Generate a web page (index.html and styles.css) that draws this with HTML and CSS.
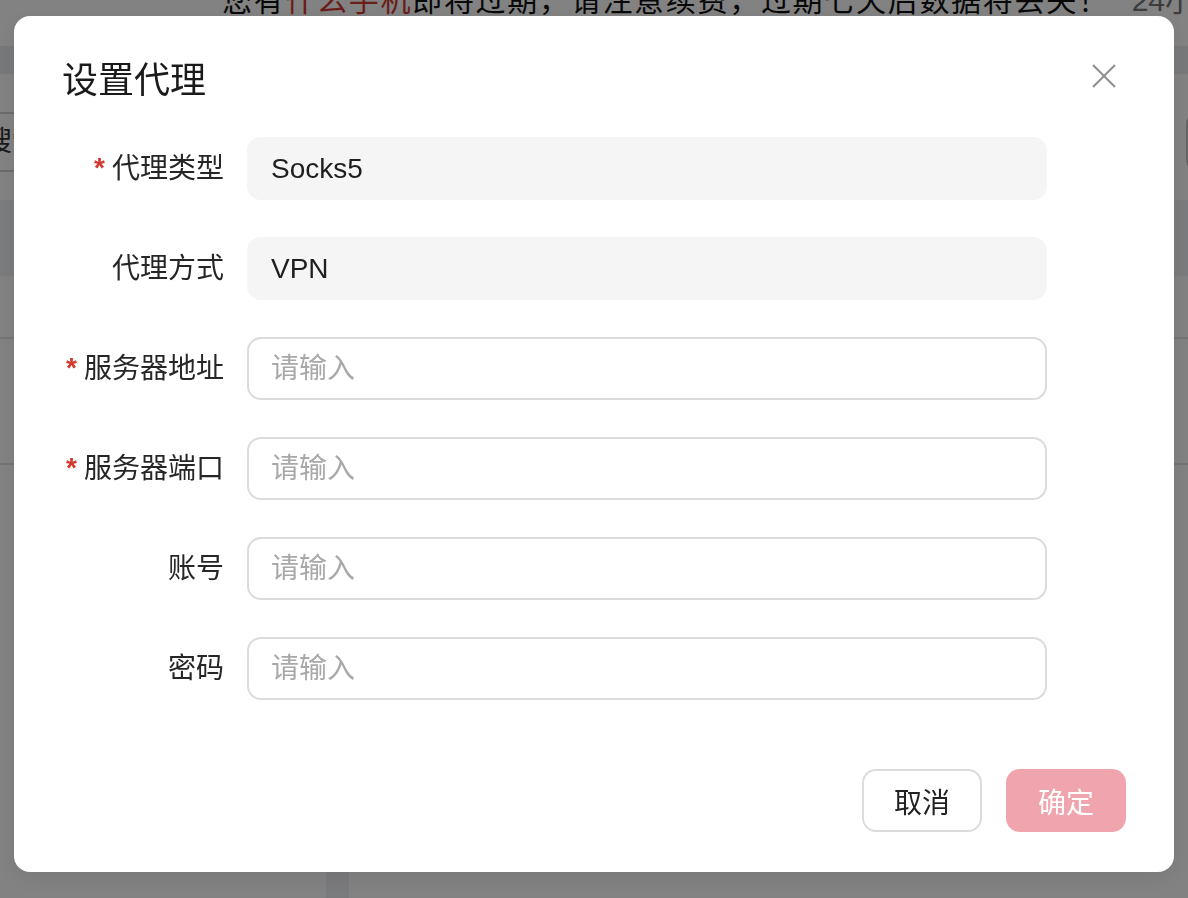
FILE: index.html
```html
<!DOCTYPE html>
<html lang="zh-CN">
<head>
<meta charset="utf-8">
<title>设置代理</title>
<link rel="stylesheet" href="styles.css">
</head>
<body>
<div class="page">
  <div class="notice">
    <span class="notice-text">您有<em class="notice-red">什么手机</em>即将过期，请注意续费，过期七天后数据将丢失！</span>
    <span class="notice-count">24小时</span>
  </div>
  <div class="band"></div>
  <div class="search-row">
    <div class="search-btn">搜索</div>
    <div class="search-right"></div>
  </div>
  <div class="table-head"></div>
  <div class="table-row table-row-short"></div>
  <div class="table-row"></div>
  <div class="page-bottom"><div class="page-tab"></div></div>
</div>

<div class="overlay">
  <div class="modal">
    <div class="modal-header">
      <h2 class="modal-title">设置代理</h2>
      <svg class="close" viewBox="0 0 24 24" width="24" height="24" aria-label="关闭">
        <path d="M1 1 L23 23 M23 1 L1 23" stroke="#8e8e8e" stroke-width="2" fill="none" stroke-linecap="butt"/>
      </svg>
    </div>
    <form class="form">
      <div class="row">
        <label class="label"><span class="star">*</span>代理类型</label>
        <input class="field field-readonly" value="Socks5" readonly>
      </div>
      <div class="row">
        <label class="label">代理方式</label>
        <input class="field field-readonly" value="VPN" readonly>
      </div>
      <div class="row">
        <label class="label"><span class="star">*</span>服务器地址</label>
        <input class="field" placeholder="请输入">
      </div>
      <div class="row">
        <label class="label"><span class="star">*</span>服务器端口</label>
        <input class="field" placeholder="请输入">
      </div>
      <div class="row">
        <label class="label">账号</label>
        <input class="field" placeholder="请输入">
      </div>
      <div class="row">
        <label class="label">密码</label>
        <input class="field" placeholder="请输入">
      </div>
    </form>
    <div class="footer">
      <button class="btn btn-cancel" type="button">取消</button>
      <button class="btn btn-ok" type="button">确定</button>
    </div>
  </div>
</div>
</body>
</html>
```

FILE: styles.css
```css
html, body {
  margin: 0;
  padding: 0;
  width: 1188px;
  height: 898px;
  overflow: hidden;
  background: #ffffff;
  font-family: "Liberation Sans", "Noto Sans CJK SC", sans-serif;
}

.page {
  width: 1188px;
  height: 898px;
  display: flex;
  flex-direction: column;
  overflow: hidden;
}

.notice {
  height: 46px;
  display: flex;
  align-items: flex-start;
  padding-left: 222px;
  flex-shrink: 0;
}

.notice-text {
  margin-top: -15px;
  font-size: 30px;
  line-height: 32px;
  letter-spacing: 1.7px;
  color: #111;
  white-space: nowrap;
}

.notice-red {
  font-style: normal;
  color: #d23a33;
}

.notice-count {
  margin-top: -15px;
  margin-left: 22px;
  font-size: 30px;
  line-height: 32px;
  color: #777;
  white-space: nowrap;
}

.band {
  height: 28px;
  background: #eceef1;
  flex-shrink: 0;
}

.search-row {
  margin-top: 38px;
  height: 60px;
  display: flex;
  justify-content: space-between;
  flex-shrink: 0;
}

.search-btn {
  margin-left: -30px;
  width: 120px;
  box-sizing: border-box;
  border: 2px solid #d0d0d0;
  border-left: none;
  font-size: 28px;
  line-height: 56px;
  padding-left: 14px;
  color: #333;
}

.search-right {
  width: 20px;
  margin-right: -18px;
  margin-top: 3px;
  height: 54px;
  box-sizing: border-box;
  border: 2px solid #c8c8c8;
  border-radius: 8px;
}

.table-head {
  margin-top: 28px;
  height: 76px;
  background: #f2f3f5;
  flex-shrink: 0;
}

.table-row {
  height: 124px;
  border-bottom: 2px solid #e6e6e6;
  flex-shrink: 0;
}

.table-row-short {
  height: 61px;
}

.page-bottom {
  flex: 1;
  display: flex;
  align-items: flex-end;
}

.page-tab {
  margin-left: 326px;
  width: 23px;
  height: 26px;
  background: #f0f1f5;
}

.overlay {
  position: fixed;
  inset: 0;
  background: rgba(0, 0, 0, 0.49);
  display: flex;
  justify-content: center;
  align-items: flex-start;
  padding-top: 16px;
}

.modal {
  width: 1160px;
  height: 856px;
  box-sizing: border-box;
  background: #ffffff;
  border-radius: 16px;
  padding: 47px 48px 40px 48px;
  display: flex;
  flex-direction: column;
  box-shadow: 0 6px 24px rgba(0, 0, 0, 0.08);
}

.modal-header {
  display: flex;
  justify-content: space-between;
  align-items: flex-start;
  height: 36px;
}

.modal-title {
  margin: 0;
  font-size: 36px;
  line-height: 36px;
  font-weight: 400;
  color: #1a1a1a;
}

.close {
  display: block;
  margin: 1px 10px 0 0;
}

.form {
  margin: 38px 0 0 0;
  display: flex;
  flex-direction: column;
  gap: 37px;
}

.row {
  display: flex;
  align-items: center;
  height: 63px;
}

.label {
  width: 162px;
  flex-shrink: 0;
  margin-right: 23px;
  text-align: right;
  font-size: 28px;
  line-height: 36px;
  color: #262626;
  white-space: nowrap;
}

.star {
  color: #d33a2f;
  margin-right: 7px;
  font-size: 28px;
  font-weight: 700;
  position: relative;
  top: -1px;
}

.field {
  width: 800px;
  height: 63px;
  box-sizing: border-box;
  border: 2px solid #dcdcdc;
  border-radius: 14px;
  padding: 0 22px;
  font-family: "Liberation Sans", "Noto Sans CJK SC", sans-serif;
  font-size: 28px;
  color: #222;
  background: #ffffff;
  outline: none;
}

.field::placeholder {
  color: #a8a8a8;
}

.field-readonly {
  background: #f5f5f5;
  border-color: #f5f5f5;
  color: #1e1e1e;
}

.footer {
  margin-top: auto;
  display: flex;
  justify-content: flex-end;
  gap: 24px;
}

.btn {
  width: 120px;
  height: 63px;
  box-sizing: border-box;
  border-radius: 14px;
  font-family: "Liberation Sans", "Noto Sans CJK SC", sans-serif;
  font-size: 28px;
  padding: 0;
  cursor: pointer;
}

.btn-cancel {
  background: #ffffff;
  border: 2px solid #dcdcdc;
  color: #222;
}

.btn-ok {
  background: #f0a4ad;
  border: none;
  color: #ffffff;
}
```
